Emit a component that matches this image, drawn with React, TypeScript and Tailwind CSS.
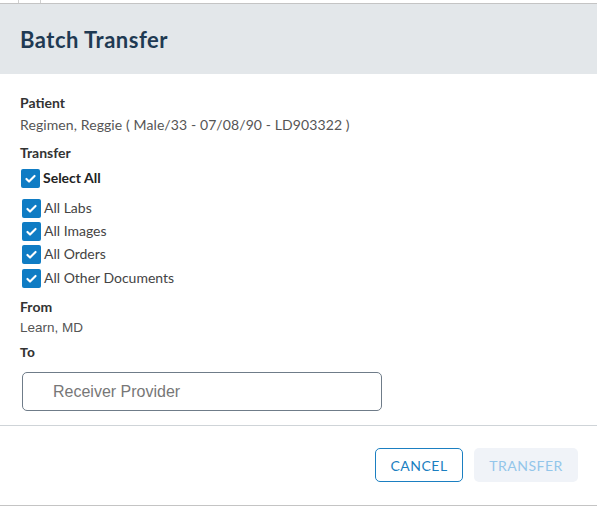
import React from "react";

function Check({ checked = true }: { checked?: boolean }) {
  return (
    <span className="flex h-[19px] w-[19px] items-center justify-center rounded-[2px] bg-[#0f7cc4]">
      {checked && (
        <svg width="13" height="13" viewBox="0 0 16 16" fill="none">
          <path d="M3 8.5l3.2 3.2L13 4.8" stroke="white" strokeWidth="2.6" strokeLinecap="round" strokeLinejoin="round" />
        </svg>
      )}
    </span>
  );
}

function CheckRow({ label, bold = false }: { label: string; bold?: boolean }) {
  return (
    <div className="flex items-center gap-[3px] pl-[22px]">
      <Check />
      <span className={`text-[14px] leading-[20px] ${bold ? "font-bold text-[#222]" : "text-[#444]"}`}>{label}</span>
    </div>
  );
}

export default function App() {
  return (
    <div className="h-[506px] w-[597px] overflow-hidden bg-white" style={{ fontFamily: "Lato, 'Noto Sans', sans-serif" }}>
      <div className="relative h-[3px] overflow-hidden bg-white">
        <div className="absolute left-[18px] top-0 h-[3px] w-px bg-[#d0d0d0]" />
        <div className="absolute left-[40px] top-0 h-[3px] w-px bg-[#d0d0d0]" />
        <div className="absolute left-[73px] top-[-12px] text-[13px] leading-[15px] text-[#1a8be0]">RDC</div>
      </div>
      <div className="flex h-[503px] flex-col border-t border-b border-[#c4c4c4]">
        <div className="flex h-[70px] items-center bg-[#e3e7ea] px-[20px]">
          <h1 className="text-[22px] font-bold tracking-[0.5px] text-[#1f3a53]">Batch Transfer</h1>
        </div>
        <div className="flex flex-col px-[20px] pt-[19px]">
          <div className="text-[14px] font-bold leading-[20px] text-[#333]">Patient</div>
          <div className="mt-[2px] text-[14px] leading-[20px] tracking-[0.1px] text-[#555]">Regimen, Reggie ( Male/33 - 07/08/90 - LD903322 )</div>
          <div className="mt-[8px] text-[14px] font-bold leading-[20px] text-[#333]">Transfer</div>
        </div>
        <div className="mt-[5px] flex flex-col">
          <div className="-ml-px"><CheckRow label="Select All" bold /></div>
          <div className="mt-[10px] flex flex-col gap-[3px]">
            <CheckRow label="All Labs" />
            <CheckRow label="All Images" />
            <CheckRow label="All Orders" />
            <div className="mt-[1px]"><CheckRow label="All Other Documents" /></div>
          </div>
        </div>
        <div className="flex flex-col px-[20px] pt-[9px]">
          <div className="text-[14px] font-bold leading-[20px] text-[#333]">From</div>
          <div className="mt-[1px] text-[13.5px] leading-[20px] text-[#555]" style={{ fontFamily: "'Liberation Sans', Arial, sans-serif" }}>Learn, MD</div>
          <div className="mt-[5px] text-[13px] font-bold leading-[20px] text-[#333]" style={{ fontFamily: "'Liberation Sans', Arial, sans-serif" }}>To</div>
        </div>
        <div className="mt-[9px] pl-[22px]">
          <div className="flex h-[39px] w-[360px] items-center rounded-[5px] border border-[#6f7c89] pl-[30px] text-[16px] text-[#777]" style={{ fontFamily: "'Liberation Sans', Arial, sans-serif" }}>
            Receiver Provider
          </div>
        </div>
        <div className="mt-[14px] border-t border-[#cfd4d8]" />
        <div className="flex justify-end gap-[11px] pr-[19px] pt-[22px]">
          <button className="h-[34px] w-[88px] rounded-[5px] border border-[#1b7fc1] text-[14px] tracking-[0.5px] text-[#1b7fc1]">CANCEL</button>
          <button className="h-[34px] w-[104px] rounded-[5px] bg-[#f0f3f8] text-[14px] tracking-[0.5px] text-[#93c6ea]">TRANSFER</button>
        </div>
      </div>
    </div>
  );
}
